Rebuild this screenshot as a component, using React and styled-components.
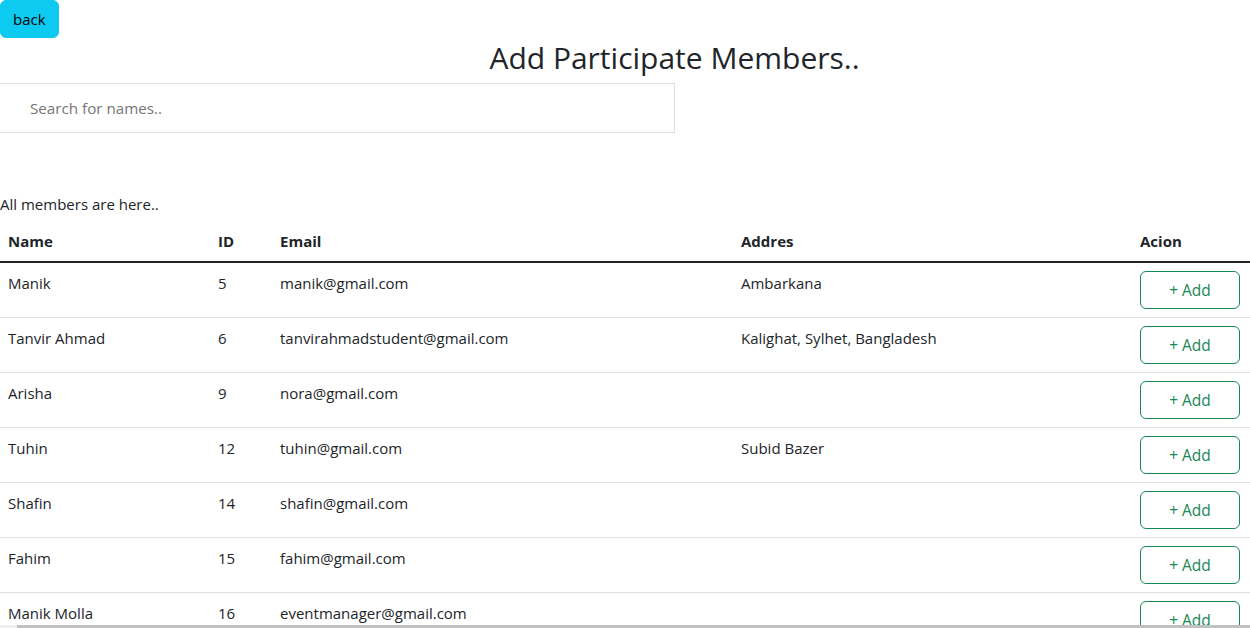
import React from "react";
import styled, { createGlobalStyle } from "styled-components";

const GlobalStyle = createGlobalStyle`
  html, body { margin: 0; padding: 0; background: #fff; }
  body {
    font-family: "Open Sans", "Noto Sans", "Liberation Sans", sans-serif;
    font-size: 15px;
    line-height: 24px;
    color: #212529;
    overflow: hidden;
  }
  * { box-sizing: border-box; }
`;

const Page = styled.div`
  display: flex;
  flex-direction: column;
  width: 1250px;
`;

const BackButton = styled.button`
  align-self: flex-start;
  font-family: inherit;
  font-size: 15px;
  line-height: 24px;
  padding: 6px 12px;
  border: 1px solid #0dcaf0;
  border-radius: 6px;
  background: #0dcaf0;
  color: #000;
  cursor: pointer;
`;

const Title = styled.h2`
  margin: 1px 0 6px;
  padding-left: 99px;
  text-align: center;
  font-size: 30px;
  font-weight: 400;
  line-height: 38px;
`;

const SearchInput = styled.input`
  width: 676px;
  height: 50px;
  margin-left: -1px;
  padding: 0 30px;
  font-family: inherit;
  font-size: 15.2px;
  color: #212529;
  border: 1px solid #dddddd;
  outline: none;
  &::placeholder { color: #757575; }
`;

const Caption = styled.p`
  margin: 59px 0 5px;
  line-height: 24px;
`;

const Table = styled.table`
  width: 1250px;
  border-collapse: collapse;
  table-layout: fixed;
`;

const HeadCell = styled.th`
  text-align: left;
  font-weight: 700;
  padding: 8px;
  line-height: 24px;
  border-bottom: 2px solid #212529;
  width: ${(p) => p.$w}px;
`;

const Row = styled.tr`
  border-bottom: 1px solid #dee2e6;
`;

const Cell = styled.td`
  padding: 8px;
  vertical-align: top;
  line-height: 24px;
`;

const AddButton = styled.button`
  width: 100px;
  font-family: inherit;
  font-size: 15.5px;
  line-height: 24px;
  padding: 6px 12px;
  border: 1px solid #198754;
  border-radius: 6px;
  background: transparent;
  color: #198754;
  cursor: pointer;
`;

const ScrollStrip = styled.div`
  position: fixed;
  left: 0;
  right: 0;
  bottom: 0;
  height: 3px;
  background: #f1f1f1;
  display: flex;
`;

const ScrollThumb = styled.div`
  margin-left: 17px;
  flex: 1;
  background: #c1c1c1;
`;

const members = [
  { name: "Manik", id: 5, email: "manik@gmail.com", addr: "Ambarkana" },
  { name: "Tanvir Ahmad", id: 6, email: "tanvirahmadstudent@gmail.com", addr: "Kalighat, Sylhet, Bangladesh" },
  { name: "Arisha", id: 9, email: "nora@gmail.com", addr: "" },
  { name: "Tuhin", id: 12, email: "tuhin@gmail.com", addr: "Subid Bazer" },
  { name: "Shafin", id: 14, email: "shafin@gmail.com", addr: "" },
  { name: "Fahim", id: 15, email: "fahim@gmail.com", addr: "" },
  { name: "Manik Molla", id: 16, email: "eventmanager@gmail.com", addr: "" },
];

export default function App() {
  return (
    <>
      <GlobalStyle />
      <Page>
        <BackButton>back</BackButton>
        <Title>Add Participate Members..</Title>
        <SearchInput placeholder="Search for names.." />
        <Caption>All members are here..</Caption>
        <Table>
          <thead>
            <tr>
              <HeadCell $w={210}>Name</HeadCell>
              <HeadCell $w={62}>ID</HeadCell>
              <HeadCell $w={461}>Email</HeadCell>
              <HeadCell $w={399}>Addres</HeadCell>
              <HeadCell $w={118}>Acion</HeadCell>
            </tr>
          </thead>
          <tbody>
            {members.map((m) => (
              <Row key={m.id}>
                <Cell>{m.name}</Cell>
                <Cell>{m.id}</Cell>
                <Cell>{m.email}</Cell>
                <Cell>{m.addr}</Cell>
                <Cell>
                  <AddButton>+ Add</AddButton>
                </Cell>
              </Row>
            ))}
          </tbody>
        </Table>
      </Page>
      <ScrollStrip>
        <ScrollThumb />
      </ScrollStrip>
    </>
  );
}
